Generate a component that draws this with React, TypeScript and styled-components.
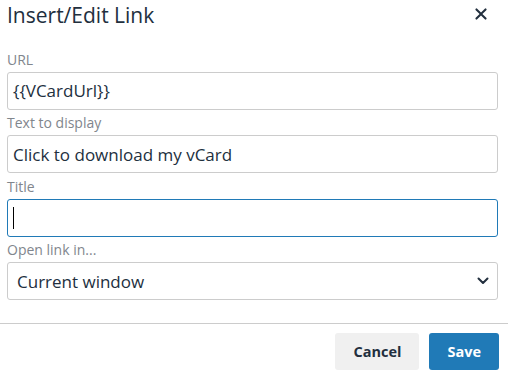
import styled, { createGlobalStyle } from 'styled-components';

const GlobalStyle = createGlobalStyle`
  * { box-sizing: border-box; }
  body {
    margin: 0;
    background: #fff;
    font-family: 'Open Sans', 'Noto Sans', sans-serif;
    color: #222f3e;
  }
`;

const Dialog = styled.div`
  width: 508px;
  height: 374px;
  display: flex;
  flex-direction: column;
  background: #fff;
  overflow: hidden;
`;

const Header = styled.div`
  display: flex;
  justify-content: space-between;
  align-items: flex-start;
  height: 46px;
  padding: 0 15px 0 7px;
`;

const Title = styled.h1`
  margin: 0;
  font-size: 21px;
  font-stretch: 95%;
  font-weight: 400;
  line-height: 30px;
  color: #222f3e;
`;

const CloseButton = styled.button`
  border: 0;
  background: none;
  padding: 0;
  margin-top: 2px;
  width: 24px;
  height: 24px;
  cursor: pointer;
`;

const Body = styled.div`
  display: flex;
  flex-direction: column;
  padding: 0 10px 0 7px;
  height: 277px;
`;

const Label = styled.label`
  display: flex;
  align-items: flex-end;
  height: 25.6px;
  padding: 0 0 3px 0;
  font-size: 14px;
  line-height: 19px;
  color: #81868d;
`;

const TextBox = styled.div<{ $focused?: boolean }>`
  display: flex;
  align-items: center;
  height: 38px;
  padding: 0 5px;
  border: 1px solid ${({ $focused }) => ($focused ? '#207ab7' : '#cccccc')};
  border-radius: 3px;
  font-size: 17px;
  font-stretch: 93%;
  white-space: nowrap;
  color: #222f3e;
`;

const Caret = styled.span`
  display: inline-block;
  width: 1px;
  height: 22px;
  background: #000;
`;

const Select = styled(TextBox)`
  justify-content: space-between;
  padding: 0 8px 0 9px;
`;

const Footer = styled.div`
  display: flex;
  justify-content: flex-end;
  gap: 10px;
  padding: 9px 9px 0 0;
  border-top: 1px solid #cccccc;
`;

const Button = styled.button<{ $primary?: boolean }>`
  height: 37px;
  padding: 0 18px;
  border: 0;
  border-radius: 3px;
  font-family: inherit;
  font-size: 14.5px;
  font-stretch: 95%;
  font-weight: 700;
  background: ${({ $primary }) => ($primary ? '#207ab7' : '#f0f0f0')};
  color: ${({ $primary }) => ($primary ? '#ffffff' : '#222f3e')};
`;

const CloseIcon = () => (
  <svg width="24" height="24" viewBox="0 0 24 24">
    <path
      fill="#222f3e"
      d="M17.3 8.2L13.4 12l3.9 3.8a1 1 0 01-1.5 1.5L12 13.4l-3.8 3.9a1 1 0 01-1.5-1.5l3.9-3.8-3.9-3.8a1 1 0 011.5-1.5l3.8 3.9 3.8-3.9a1 1 0 011.5 1.5z"
    />
  </svg>
);

const ChevronDown = () => (
  <svg width="12" height="8" viewBox="0 0 12 8">
    <path d="M1.5 1.5L6 6l4.5-4.5" fill="none" stroke="#222f3e" strokeWidth="2" strokeLinecap="round" strokeLinejoin="round" />
  </svg>
);

export default function App(): JSX.Element {
  return (
    <Dialog>
      <GlobalStyle />
      <Header>
        <Title>Insert/Edit Link</Title>
        <CloseButton aria-label="Close">
          <CloseIcon />
        </CloseButton>
      </Header>
      <Body>
        <Label>URL</Label>
        <TextBox>{'{{VCardUrl}}'}</TextBox>
        <Label>Text to display</Label>
        <TextBox>Click to download my vCard</TextBox>
        <Label>Title</Label>
        <TextBox $focused>
          <Caret />
        </TextBox>
        <Label>Open link in...</Label>
        <Select>
          Current window
          <ChevronDown />
        </Select>
      </Body>
      <Footer>
        <Button>Cancel</Button>
        <Button $primary>Save</Button>
      </Footer>
    </Dialog>
  );
}
